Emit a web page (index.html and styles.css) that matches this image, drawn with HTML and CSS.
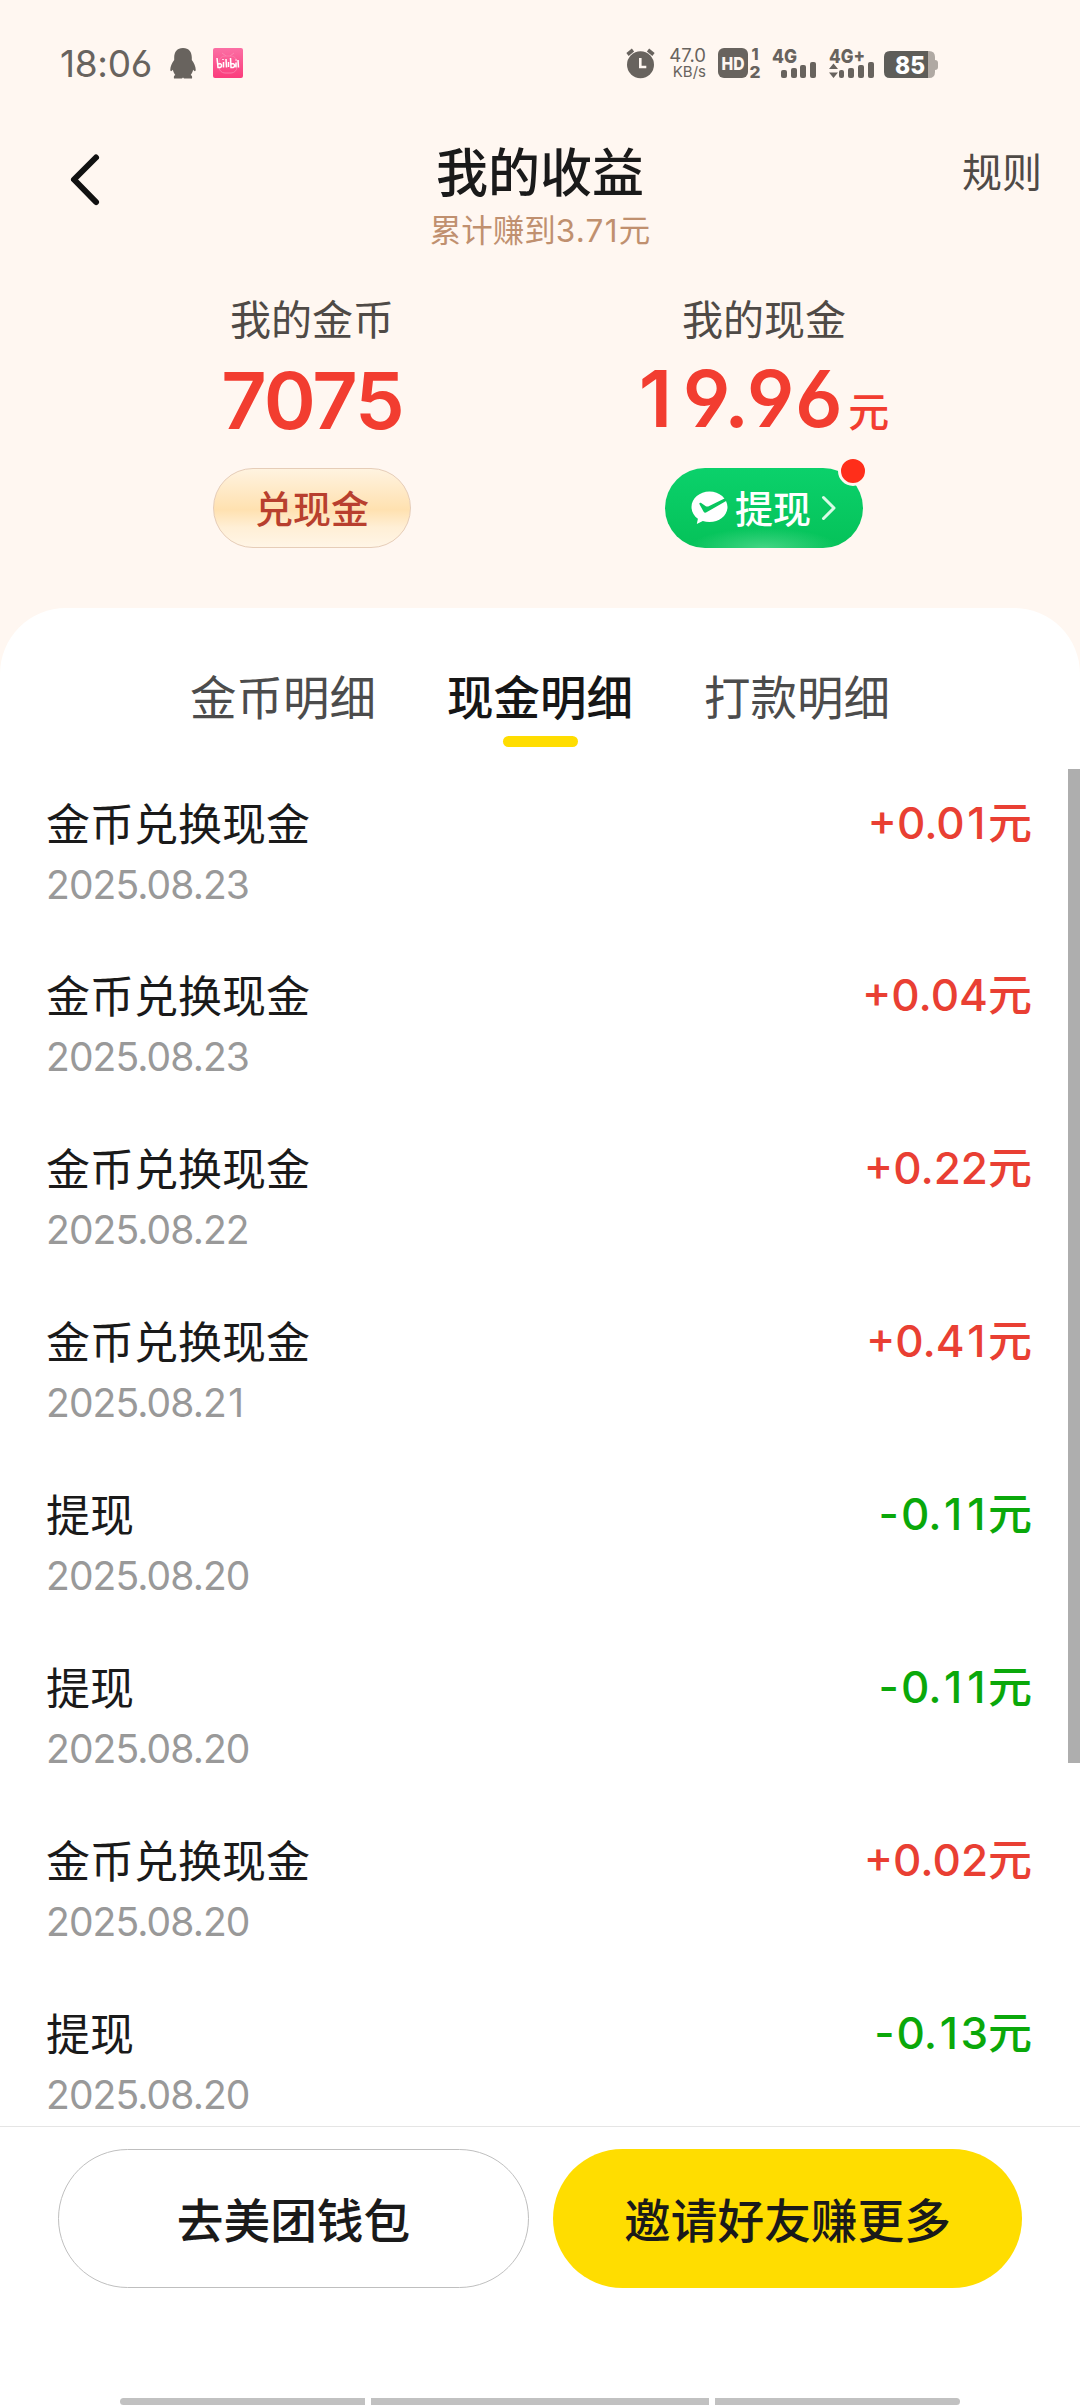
FILE: index.html
```html
<!DOCTYPE html>
<html lang="zh-CN">
<head>
<meta charset="utf-8">
<title>我的收益</title>
<link rel="stylesheet" href="styles.css">
</head>
<body>
<div class="status">
  <span class="time">18:06</span>
  <svg class="qq" width="26" height="31" viewBox="0 0 26 31"><path d="M13 0C7 0 4.200 4 4.200 9.500V12C2 15 .3 18.500.3 21.500c0 2 1 2.400 2.600.300C3.300 24 4 25.500 5.300 27 4 27.500 3.600 28.500 4 30.500h8l1-1 1 1h8c.4-2 0-3-1.300-3.500 1.300-1.500 2-3 2.400-5.200 1.600 2.100 2.600 1.700 2.600-.3 0-3-1.700-6.500-3.900-9.500V9.500C21.800 4 19 0 13 0z"/></svg>
  <svg class="bili" width="30" height="30" viewBox="0 0 30 30"><defs><linearGradient id="pk" x2="0" y2="1"><stop stop-color="#fb6fa4"/><stop offset="1" stop-color="#fb3c7c"/></linearGradient></defs><rect width="30" height="30" rx="2" fill="url(#pk)"/><path d="M9 5l4 3M21 5l-4 3" stroke="#fc85b0"/><rect x="6" y="8" width="18" height="17" rx="6" fill="none" stroke="#fc78a8"/><path d="M4 10l1 9.500q4 .5 3.500-2.500-.5-2-3.500-1M10.500 14v5.500M10 11v1M13 11l.5 8.500M15.500 14v5M17.500 10l.5 9.500q4 .5 3.500-2.500-.5-2-3.500-1M23 14.500v5M23 11.500v1M25 12l.5 7.500" fill="none" stroke="#fff" stroke-width="1.500"/></svg>
  <div class="right">
    <svg width="29" height="31" viewBox="0 0 29 31"><circle cx="14.500" cy="16.800" r="13.500"/><path d="M1.500 6.500L7 2M27.500 6.500L22 2" stroke="#68635e" stroke-width="3.600"/><path d="M14.300 10v9h6" fill="none" stroke="#fff7f1" stroke-width="2.600"/></svg>
    <div class="net"><span class="n1">47.0</span><span class="n2">KB/s</span></div>
    <svg class="hd" width="43" height="31" viewBox="0 0 43 31"><rect y="0" width="30" height="30" rx="6"/><text class="t hdt" x="3.500" y="22" textLength="23" lengthAdjust="spacingAndGlyphs">HD</text><text class="t" x="33.500" y="12" font-size="16">1</text><text class="t" x="31.500" y="30" font-size="16" textLength="11" lengthAdjust="spacingAndGlyphs">2</text></svg>
    <svg class="s1" width="45" height="31" viewBox="0 0 45 31"><text class="t" x="0" y="14.500" font-size="19" textLength="25" lengthAdjust="spacingAndGlyphs">4G</text><rect x="9" y="22" width="6" height="8" rx="2"/><rect x="19" y="20" width="6" height="10" rx="2"/><rect x="28" y="17" width="6" height="13" rx="2"/><rect x="38" y="14" width="6" height="16" rx="2"/></svg>
    <svg class="s2" width="45" height="31" viewBox="0 0 45 31"><text class="t" x="0" y="14.500" font-size="19" textLength="36" lengthAdjust="spacingAndGlyphs">4G+</text><path d="M0 21l4.500-5.500L9 21zM0 24.500l4.500 5.500L9 24.500z"/><rect x="10" y="22" width="5" height="8" rx="2"/><rect x="19" y="20" width="6" height="10" rx="2"/><rect x="29" y="17" width="6" height="13" rx="2"/><rect x="39" y="14" width="6" height="16" rx="2"/></svg>
    <svg class="bat" width="54" height="28" viewBox="0 0 54 28"><path d="M43 0h2q6 0 6 6v3q3 0 3 3v4q0 3-3 3v2q0 6-6 6h-2z" fill="#b0a9a3"/><path d="M6 0h38v27H6q-6 0-6-6V6q0-6 6-6z" fill="#5e5d59"/><text class="t charge" x="11" y="22.500" font-size="25" textLength="30" lengthAdjust="spacingAndGlyphs">85</text></svg>
  </div>
</div>
<header class="nav">
  <svg class="back" width="36" height="56" viewBox="0 0 36 56"><path d="M30 5.500L8 27.500 30 50" fill="none" stroke="#111" stroke-width="6" stroke-linecap="round" stroke-linejoin="round"/></svg>
  <div class="heading"><h1>我的收益</h1><p>累计赚到<span>3.71</span>元</p></div>
  <a class="rules">规则</a>
</header>
<section class="balance">
  <div class="col">
    <div class="label">我的金币</div>
    <div class="num"><b class="coin">7075</b></div>
    <button class="pill gold">兑现金</button>
  </div>
  <div class="col">
    <div class="label">我的现金</div>
    <div class="num"><b class="cash"><span class="lead">1</span>9.96</b><i>元</i></div>
    <button class="pill green">
      <svg class="wx" width="37" height="34" viewBox="0 0 37 34"><path d="M18.500 0.500C8.600.5.500 7.400.500 16c0 4.800 2.500 9 6.400 11.800L5.800 33l6-3.100c2.100.7 4.300 1.100 6.700 1.100 9.900 0 18-6.600 18-15S28.400.500 18.500.500z" fill="#fff"/><path d="M8.500 13.200c-.6-1.300.6-2 1.700-1.200l4.600 3.200c.8.500 1.600.5 2.400.2L34 7.200l2 2.200L15.500 21.300c-1.200.8-2.400.4-3-.8z" fill="#08c65e"/></svg>
      <span>提现</span>
      <svg class="chev" width="16" height="26" viewBox="0 0 16 26"><path d="M2.500 2.500L13 13 2.500 23.500" fill="none" stroke="#d8fbe6" stroke-width="3" stroke-linecap="round" stroke-linejoin="round"/></svg>
      <em class="dot"></em>
    </button>
  </div>
</section>
<main class="sheet">
  <nav class="tabs"><a>金币明细</a><a class="active">现金明细</a><a>打款明细</a></nav>
  <ul class="list">
    <li><div><h2>金币兑换现金</h2><time>2025.08.23</time></div><strong class="in"><span>+0.0<u>1</u></span>元</strong></li>
    <li><div><h2>金币兑换现金</h2><time>2025.08.23</time></div><strong class="in"><span>+0.04</span>元</strong></li>
    <li><div><h2>金币兑换现金</h2><time>2025.08.22</time></div><strong class="in"><span>+0.22</span>元</strong></li>
    <li><div><h2>金币兑换现金</h2><time>2025.08.2<u>1</u></time></div><strong class="in"><span>+0.4<u>1</u></span>元</strong></li>
    <li><div><h2>提现</h2><time>2025.08.20</time></div><strong class="out"><span><b>-</b>0.<u>1</u><u>1</u></span>元</strong></li>
    <li><div><h2>提现</h2><time>2025.08.20</time></div><strong class="out"><span><b>-</b>0.<u>1</u><u>1</u></span>元</strong></li>
    <li><div><h2>金币兑换现金</h2><time>2025.08.20</time></div><strong class="in"><span>+0.02</span>元</strong></li>
    <li><div><h2>提现</h2><time>2025.08.20</time></div><strong class="out"><span><b>-</b>0.<u>1</u>3</span>元</strong></li>
  </ul>
  <div class="scrollbar"></div>
</main>
<footer class="bottom">
  <div class="actions"><button class="wallet">去美团钱包</button><button class="invite">邀请好友赚更多</button></div>
  <div class="gesture"><i></i><i class="mid"></i><i></i></div>
</footer>
</body>
</html>
```

FILE: styles.css
```css
* { box-sizing: border-box; margin: 0; padding: 0; }
body {
  width: 1080px; height: 2408px; overflow: hidden;
  display: flex; flex-direction: column;
  background: #fff7f1; color: #1a1a1a;
  font-family: Inter, "Noto Sans CJK SC", sans-serif;
  font-feature-settings: "cv03", "cv04";
}
svg { display: block; flex: none; overflow: visible; }
button { font: inherit; border: 0; background: none; }
i, em { font-style: normal; }
.status { height: 130px; display: flex; align-items: flex-start; padding: 48px 142px 0 60px; color: #68635e; fill: #68635e; }
.time { font-size: 37px; line-height: 32px; width: 92px; letter-spacing: -.3px; white-space: nowrap; }
.qq { margin-left: 18px; }
.bili { margin-left: 17px; }
.right { margin-left: auto; display: flex; align-items: flex-start; }
.net { width: 40px; margin-left: 11px; display: flex; flex-direction: column; align-items: flex-end; white-space: nowrap; }
.n1 { font-size: 18.500px; line-height: 14px; }
.n2 { font-size: 15px; line-height: 20px; }
.t { font-family: Inter, sans-serif; font-weight: 800; }
.hdt { font-size: 18px; fill: #fff7f1; }
.charge { fill: #fff; }
.hd { margin-left: 12px; }
.s1 { margin-left: 11px; }
.s2 { margin-left: 12px; }
.bat { margin: 3px 0 0 10px; }
.nav { height: 162px; display: grid; grid-template-columns: 1fr 240px 1fr; padding: 0 38px; }
.back { margin: 22px 0 0 28px; }
.heading { text-align: center; white-space: nowrap; }
.heading h1 { font-size: 52px; font-weight: 500; line-height: 60px; margin-top: 14px; }
.heading p { font-size: 31.500px; line-height: 40px; margin-top: 7px; color: #c0906f; }
.heading p span { letter-spacing: 1.300px; }
.rules { justify-self: end; font-size: 40px; line-height: 50px; margin-top: 18px; color: #4f4a46; }
.balance { height: 316px; display: grid; grid-template-columns: 452px 452px; padding-left: 86px; }
.col { display: flex; flex-direction: column; align-items: center; }
.label { font-size: 41px; line-height: 57px; color: #4f4a46; }
.num { height: 119px; display: flex; align-items: baseline; color: #f23d30; white-space: nowrap; }
.num b { font-size: 79px; line-height: 102px; font-weight: 600; }
.num .coin { letter-spacing: -2px; }
.num .cash { line-height: 99px; letter-spacing: 1.500px; }
.lead { margin-right: 9px; }
.num i { font-size: 41px; font-weight: 500; margin-left: 4px; }
.pill { width: 198px; height: 80px; border-radius: 40px; display: flex; align-items: center; justify-content: center; font-size: 38px; font-weight: 500; padding-bottom: 3px; }
.gold { color: #b83f2e; border: 1px solid #e6cdb8; background: linear-gradient(#fff3e0, #ffe1b0 52%, #ffefd6 75%, #fff5e6); }
.green { position: relative; color: #fff; background: radial-gradient(ellipse 75px 20px at 50% 100%, #43d584, rgba(67,213,132,0)), linear-gradient(#0bd16b, #05c259); }
.wx { margin-top: 3px; }
.chev { margin-top: 2px; }
.green span { margin: 0 10px 0 7px; }
.dot { position: absolute; top: -12px; right: -5px; width: 30px; height: 30px; border-radius: 50%; background: #ff2e1a; border: 3px solid #fff7f1; }
.sheet { position: relative; height: 1518px; overflow: hidden; background: #fff; border-radius: 66px 66px 0 0; }
.tabs { height: 161px; display: flex; justify-content: center; gap: 71px; padding-top: 58px; font-size: 46.500px; line-height: 64px; color: #4c4c4c; }
.active { color: #161616; font-weight: 500; display: flex; flex-direction: column; align-items: center; }
.active::after { content: ""; width: 75px; height: 11px; margin-top: 6px; border-radius: 5.500px; background: #fd0; }
.list { list-style: none; padding: 0 48px 0 46px; }
.list li { height: 172.900px; display: flex; justify-content: space-between; padding-top: 23.500px; }
.list h2 { font-size: 44px; font-weight: 400; line-height: 64px; }
.list time { display: block; font-size: 39px; line-height: 56px; color: #999; letter-spacing: -.9px; }
.list strong { font-size: 44px; font-weight: 500; line-height: 60px; }
.list strong span { font-weight: 550; }
.list u { text-decoration: none; margin: 0 2.500px; }
.list b { font-weight: inherit; margin-right: 2px; }
.in { color: #e93f33; }
.out { color: #0aa80a; }
.scrollbar { position: absolute; right: 0; top: 161px; width: 12px; height: 994px; background: #aeaeae; }
.bottom { height: 282px; border-top: 1px solid #e5e5e5; background: #fff; display: flex; flex-direction: column; }
.actions { display: flex; gap: 24px; padding: 22px 58px 0; }
.actions button { flex: 1; height: 139px; padding-bottom: 2px; border-radius: 70px; font-size: 46.700px; font-weight: 500; color: #1a1a1a; }
.actions .wallet { border: 1px solid #bfbfbf; }
.actions .invite { background: #fd0; }
.gesture { display: flex; gap: 6px; padding: 0 120px; margin-top: auto; margin-bottom: 3px; }
.gesture i { flex: 0 0 245px; height: 7px; background: #c1c1c1; border-radius: 4px 0 0 4px; }
.gesture .mid { flex: 1; border-radius: 0; }
.gesture i:last-child { border-radius: 0 4px 4px 0; }
```
